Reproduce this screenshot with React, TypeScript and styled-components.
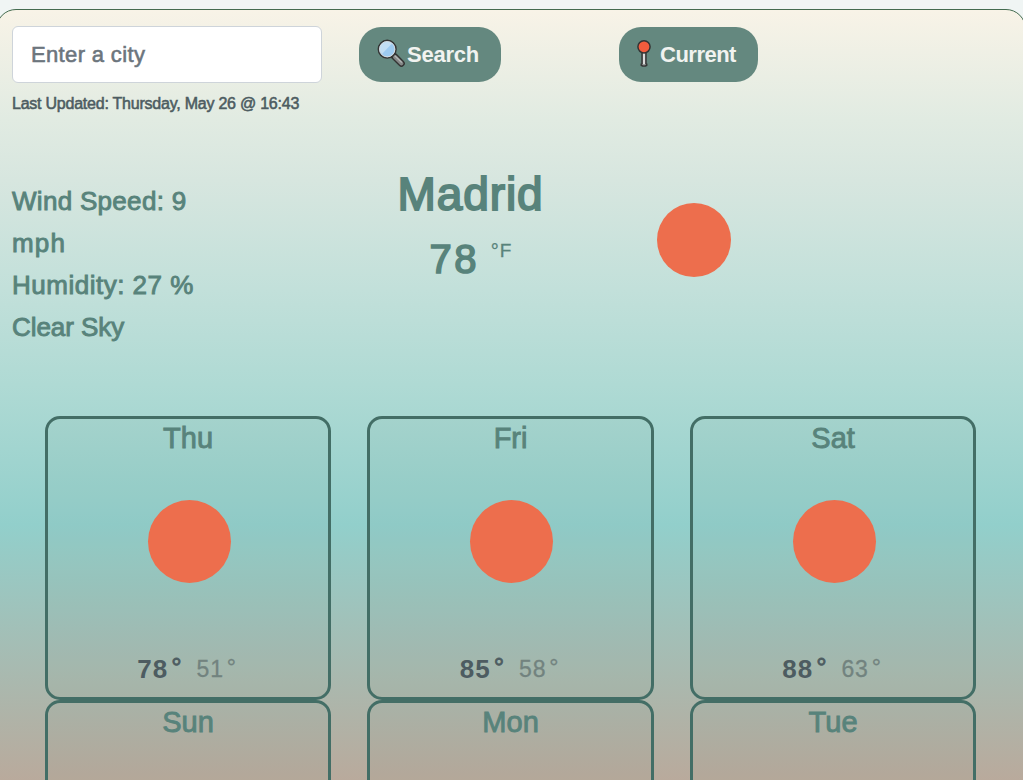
import React from "react";
import styled, { createGlobalStyle } from "styled-components";

const Global = createGlobalStyle`
  * { box-sizing: border-box; }
  html, body { margin: 0; height: 780px; overflow: hidden; background: #f0f5f4; }
  body { font-family: "Liberation Sans", Arial, sans-serif; color: #58837b; }
`;

const Page = styled.div`
  height: 780px;
  padding-top: 9px;
  overflow: hidden;
`;

const Panel = styled.main`
  width: 1030px;
  height: 900px;
  margin-left: -4px;
  padding: 16px 0 0 15px;
  border: 1px solid #436b4f;
  border-radius: 20px;
  background: linear-gradient(180deg, #f8f3e7 0px, #e1ebe2 110px, #d7e6df 170px, #c2e0da 280px, #afdad4 375px, #92cfcb 515px, #b9aa9c 770px, #c0a292 900px);
`;

const Label = styled.span<{ $size: number; $spacing: number; $stroke?: number; $color?: string; $weight?: number }>`
  display: block;
  white-space: nowrap;
  font-size: ${(p) => p.$size}px;
  font-weight: ${(p) => p.$weight ?? 400};
  letter-spacing: ${(p) => p.$spacing}px;
  color: ${(p) => p.$color ?? "#58837b"};
  -webkit-text-stroke: ${(p) => p.$stroke ?? 0.9}px currentColor;
`;

const SearchBar = styled.form`
  display: flex;
  height: 57px;
`;

const CityInput = styled.input`
  width: 310px;
  height: 57px;
  margin-right: 37px;
  padding: 0 18px;
  border: 1px solid #ced4da;
  border-radius: 6px;
  background: #fff;
  font: 22px "Liberation Sans", Arial, sans-serif;
  letter-spacing: 0.35px;
  &::placeholder { color: #6c757d; opacity: 1; -webkit-text-stroke: 0.6px #6c757d; }
`;

const ActionButton = styled.button<{ $width: number; $gap: number }>`
  display: flex;
  align-items: center;
  gap: ${(p) => p.$gap}px;
  width: ${(p) => p.$width}px;
  height: 55px;
  margin: 1px 118px 0 0;
  padding: 0 0 0 18px;
  border: 0;
  border-radius: 22px;
  background: #64887f;
  font-family: "Liberation Sans", Arial, sans-serif;
  svg { flex: none; margin-top: -2px; }
`;

const Updated = styled.div`
  height: 20px;
  margin-top: 11px;
  line-height: 20px;
`;

const Current = styled.section`
  display: grid;
  grid-template-columns: 336px 245px 180px;
  height: 302px;
  padding-top: 66px;
`;

const Details = styled.div`
  width: 200px;
  line-height: 42px;
`;

const Place = styled.div`
  text-align: center;
`;

const City = styled.h1`
  height: 54px;
  margin: -13px 0 0;
  line-height: 54px;
`;

const Temperature = styled.div`
  display: flex;
  align-items: flex-start;
  justify-content: center;
  gap: 12px;
  height: 54px;
  margin-top: 11px;
  line-height: 54px;
`;

const Unit = styled.div`
  display: flex;
  gap: 1px;
  line-height: 38px;
`;

const Sun = styled.div<{ $size: number }>`
  width: ${(p) => p.$size}px;
  height: ${(p) => p.$size}px;
  flex: none;
  border-radius: 50%;
  background: #ed6e4d;
`;

const CurrentIcon = styled.div`
  padding: 23px 0 0 64px;
`;

const Forecast = styled.section`
  display: grid;
  grid-template-columns: repeat(3, 286.2px);
  column-gap: 36.3px;
  row-gap: 0;
  margin-left: 33px;
`;

const Day = styled.article`
  display: flex;
  flex-direction: column;
  align-items: center;
  height: 284px;
  border: 3px solid #436e66;
  border-radius: 15px;
  background: rgba(100, 136, 127, 0.06);
`;

const DayName = styled.div`
  height: 81px;
  line-height: 38px;
`;

const DayIcon = styled.div`
  padding-left: 2px;
`;

const Range = styled.div`
  display: flex;
  align-items: center;
  gap: 15px;
  height: 40px;
  margin-top: 66px;
  padding-right: 3px;
`;

const Degrees = styled.div`
  display: flex;
  align-items: baseline;
  gap: 3px;
`;

const DegreeMark = styled(Label)`
  line-height: 1;
  padding-bottom: 3px;
  align-self: flex-start;
`;

const SearchIcon = () => (
  <svg width="29" height="29" viewBox="0 0 29 29">
    <path d="M17 17L24.4 24.4" stroke="#343434" strokeWidth="6.8" strokeLinecap="round" />
    <path d="M18 18L24.4 24.4" stroke="#858787" strokeWidth="4" strokeLinecap="round" />
    <path d="M17.8 16.8L24.5 23.2" stroke="#b4b6b6" strokeWidth="1.2" strokeLinecap="round" />
    <circle cx="10.2" cy="10.2" r="8.8" fill="#9dcaf0" stroke="#343434" strokeWidth="1.6" />
    <path d="M3 12A7.5 7.5 0 0 1 15 4.5L5 15Z" fill="#c2def4" />
    <circle cx="10.2" cy="10.2" r="7.7" fill="none" stroke="#dedede" strokeWidth=".9" />
  </svg>
);

const PinIcon = () => (
  <svg width="14" height="29" viewBox="0 0 14 29">
    <path d="M5 12V24.5Q3.8 25 4.2 26.3Q7 28 9.8 26.3Q10.2 25 9 24.5V12Z" fill="#858787" stroke="#343434" strokeWidth="1.4" />
    <path d="M7 13V25.3" stroke="#f0f0f0" strokeWidth="1.6" />
    <circle cx="7" cy="7.8" r="6.1" fill="#f25c3d" stroke="#343434" strokeWidth="1.5" />
  </svg>
);

const days = [
  { name: "Thu", high: 78, low: 51 }, { name: "Fri", high: 85, low: 58 }, { name: "Sat", high: 88, low: 63 },
  { name: "Sun" }, { name: "Mon" }, { name: "Tue" },
];

export default function App() {
  return (
    <Page>
      <Global />
      <Panel>
        <SearchBar>
          <CityInput placeholder="Enter a city" />
          <ActionButton type="button" $width={142} $gap={1}>
            <SearchIcon />
            <Label $size={22} $spacing={-0.25} $weight={700} $stroke={0} $color="#f1f3f0">Search</Label>
          </ActionButton>
          <ActionButton type="button" $width={139} $gap={9}>
            <PinIcon />
            <Label $size={22} $spacing={-0.5} $weight={700} $stroke={0} $color="#f1f3f0">Current</Label>
          </ActionButton>
        </SearchBar>
        <Updated><Label $size={16} $spacing={-0.23} $stroke={0.55} $color="#4d5c61">Last Updated: Thursday, May 26 @ 16:43</Label></Updated>
        <Current>
          <Details>
            <Label $size={26} $spacing={0.3}>Wind Speed: 9</Label>
            <Label $size={26} $spacing={1.2}>mph</Label>
            <Label $size={26} $spacing={0.5}>Humidity: 27 %</Label>
            <Label $size={26} $spacing={-0.05}>Clear Sky</Label>
          </Details>
          <Place>
            <City><Label $size={46} $spacing={0.9} $stroke={1.9}>Madrid</Label></City>
            <Temperature>
              <Label $size={40} $spacing={2.4} $stroke={1.6}>78</Label>
              <Unit>
                <Label $size={20} $spacing={0} $stroke={0.3}>°</Label>
                <Label $size={19} $spacing={0} $stroke={0.3}>F</Label>
              </Unit>
            </Temperature>
          </Place>
          <CurrentIcon><Sun $size={74} /></CurrentIcon>
        </Current>
        <Forecast>
          {days.map((d) => (
            <Day key={d.name}>
              <DayName><Label $size={29} $spacing={0}>{d.name}</Label></DayName>
              <DayIcon><Sun $size={83} /></DayIcon>
              {d.high && (
                <Range>
                  <Degrees>
                    <Label $size={26} $spacing={1} $weight={700} $stroke={0} $color="#4d5c61">{d.high}</Label>
                    <DegreeMark $size={26} $spacing={0} $stroke={0.8} $color="#4d5c61">°</DegreeMark>
                  </Degrees>
                  <Degrees>
                    <Label $size={23} $spacing={0.8} $stroke={0.3} $color="#72837f">{d.low}</Label>
                    <DegreeMark $size={23} $spacing={0} $stroke={0.3} $color="#72837f">°</DegreeMark>
                  </Degrees>
                </Range>
              )}
            </Day>
          ))}
        </Forecast>
      </Panel>
    </Page>
  );
}
